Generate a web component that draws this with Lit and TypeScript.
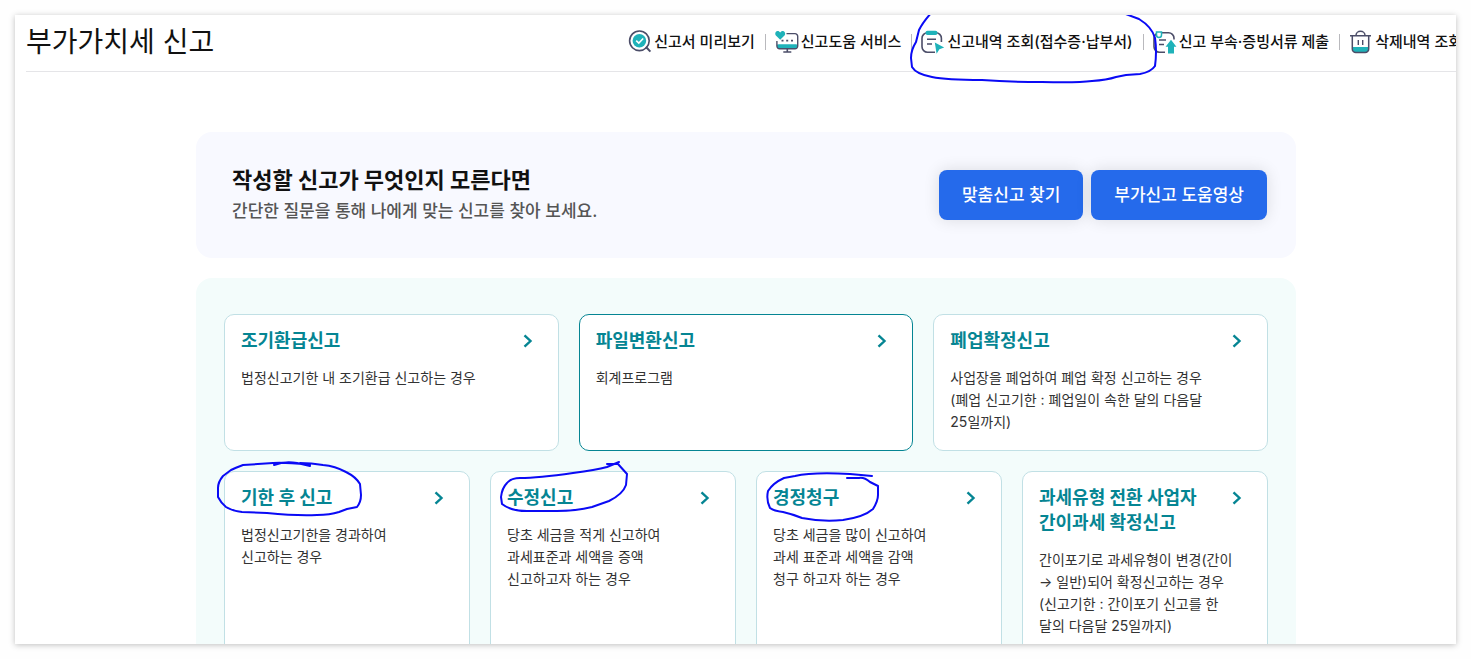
import { LitElement, html, svg, css, nothing } from "lit";
import { customElement } from "lit/decorators.js";
import { classMap } from "lit/directives/class-map.js";

const INK = "#4b4d68";
const TEAL = "#1fb2b9";

const icons = {
  preview: svg`
    <circle cx="11.4" cy="10.8" r="9.8" fill="none" stroke=${INK} stroke-width="1.6"/>
    <path d="M17.8 16.8l4.6 4.8" stroke=${INK} stroke-width="2" fill="none"/>
    <circle cx="11.4" cy="10.8" r="6.8" fill=${TEAL}/>
    <path d="M8.2 10.6l2.6 2.5 4.4-4.6" fill="none" stroke="#fff" stroke-width="1.6"/>`,
  help: svg`
    <path d="M2 14.5h20.6v1.8a2.6 2.6 0 0 1-2.6 2.6H4.6A2.6 2.6 0 0 1 2 16.3z" fill=${TEAL}/>
    <path d="M11.5 3.6H20a2.7 2.7 0 0 1 2.7 2.7V16a2.7 2.7 0 0 1-2.7 2.7H4.6A2.7 2.7 0 0 1 1.9 16V11" fill="none" stroke=${INK} stroke-width="1.4"/>
    <path d="M3.200 14.500h18.200v3.500H4.800q-1.600 0-1.600-2z" fill=${TEAL}/>
    <path d="M12.3 18.7v3.2M8.3 22h8" stroke=${INK} stroke-width="1.6" fill="none"/>
    <path d="M6.500 10.7h2M11.2 10.7h2M16 10.7h2" stroke=${INK} stroke-width="1.8"/>
    <path d="M5.2 9.8L.9 5.6C-.4 4 .3 1.3 2.5 1.1c1.2-.1 2 .5 2.7 1.5.7-1 1.5-1.6 2.7-1.5 2.2.2 2.9 2.9 1.6 4.5z" fill=${TEAL}/>`,
  history: svg`
    <path d="M20.4 12V8.2a5.5 5.5 0 0 0-5.5-5.5H6.5A5.5 5.5 0 0 0 1 8.2v8.6a5.5 5.5 0 0 0 5.5 5.5H14" fill="none" stroke=${INK} stroke-width="1.6"/>
    <rect x="4.5" y=".8" width="12" height="4.2" rx="2" fill=${TEAL}/>
    <path d="M6 9.3h9M6 14h5" stroke=${INK} stroke-width="1.5"/>
    <path d="M13.8 12.6l9.4 5-4.8 1.6-2.8 4.6z" fill=${TEAL}/>`,
  submit: svg`
    <path d="M21 9.5V8.2a5.5 5.5 0 0 0-5.5-5.5H6.5A5.5 5.5 0 0 0 1 8.2v8.6a5.5 5.5 0 0 0 5.5 5.5H12" fill="none" stroke=${INK} stroke-width="1.6"/>
    <path d="M3.5 2h5v3a2.5 2.5 0 0 1-5 0z" fill="#fff" stroke=${TEAL} stroke-width="1.5"/>
    <path d="M6 10h7M6 14.5h5" stroke=${INK} stroke-width="1.5"/>
    <path d="M18 9.8l5.4 7h-2.4v6.6h-6v-6.6h-2.4z" fill=${TEAL}/>`,
  trash: svg`
    <path d="M3.6 17h15.8v2.4a3 3 0 0 1-3 3H6.6a3 3 0 0 1-3-3z" fill=${TEAL}/>
    <path d="M3.3 6v13a3.5 3.5 0 0 0 3.5 3.5h9.4a3.5 3.5 0 0 0 3.5-3.5V6M1 5.8h21M7 5.5a4.5 4.2 0 0 1 9 0" fill="none" stroke=${INK} stroke-width="1.5"/>
    <path d="M9.3 10v5M13.7 10v5" stroke=${INK} stroke-width="1.4"/>`,
};

interface MenuItem {
  label: string;
  icon: keyof typeof icons;
  circled?: boolean;
}

const menu: MenuItem[] = [
  { label: "신고서 미리보기", icon: "preview" },
  { label: "신고도움 서비스", icon: "help" },
  { label: "신고내역 조회(접수증·납부서)", icon: "history", circled: true },
  { label: "신고 부속·증빙서류 제출", icon: "submit" },
  { label: "삭제내역 조회", icon: "trash" },
];

interface Card {
  title: string[];
  lines: string[];
  active?: boolean;
  pen?: string;
}

const periodCards: Card[] = [
  { title: ["조기환급신고"], lines: ["법정신고기한 내 조기환급 신고하는 경우"] },
  { title: ["파일변환신고"], lines: ["회계프로그램"], active: true },
  {
    title: ["폐업확정신고"],
    lines: ["사업장을 폐업하여 폐업 확정 신고하는 경우", "(폐업 신고기한 : 폐업일이 속한 달의 다음달", "25일까지)"],
  },
];

const otherCards: Card[] = [
  {
    title: ["기한 후 신고"],
    lines: ["법정신고기한을 경과하여", "신고하는 경우"],
    pen: "M95 6L82 3C72 1 64 3 59 5M95 5C86 4 70 2 58 3L28 5Q20 8 16 10L8 16Q3 22 3 28L3 37Q6 43 11 47Q18 51 27 52L52 53Q82 56 102 55Q115 55 124 52L132 49L142 47Q146 42 146 35L145 24Q141 17 131 12Q120 6 108 5Q96 3 85 3",
  },
  {
    title: ["수정신고"],
    lines: ["당초 세금을 적게 신고하여", "과세표준과 세액을 증액", "신고하고자 하는 경우"],
    pen: "M126 4L137 4L146 14L145 25Q142 34 128 41L111 47Q95 51 76 51L46 51Q30 51 21 44L20 37Q21 28 26 23Q30 18 39 18Q57 18 92 13Q115 10 126 7L138 2",
  },
  {
    title: ["경정청구"],
    lines: ["당초 세금을 많이 신고하여", "과세 표준과 세액을 감액", "청구 하고자 하는 경우"],
    pen: "M125 16L103 14Q65 12 48 16L37 18Q26 23 21 31Q19 40 23 48Q27 51 36 52Q45 54 55 58Q75 62 96 60Q117 57 126 49Q131 41 131 35L131 26L123 22Q117 17 112 18L100 18",
  },
  {
    title: ["과세유형 전환 사업자", "간이과세 확정신고"],
    lines: ["간이포기로 과세유형이 변경(간이", "→ 일반)되어 확정신고하는 경우", "(신고기한 : 간이포기 신고를 한", "달의 다음달 25일까지)"],
  },
];

const breakLines = (lines: string[]) =>
  lines.map((line, i) => html`${i ? html`<br />` : nothing}${line}`);

@customElement("app-root")
export class AppRoot extends LitElement {
  static styles = css`
    :host {
      display: flex;
      box-sizing: border-box;
      height: 100vh;
      padding: 15px;
      background: #fefefe;
      color: #111;
      font-family: Inter, "Noto Sans CJK KR", sans-serif;
      word-break: keep-all;
    }
    * {
      box-sizing: border-box;
      margin: 0;
    }
    a {
      color: inherit;
      text-decoration: none;
    }
    .shadow {
      display: flex;
      flex: 1;
      min-width: 0;
      box-shadow: 0 1px 6px rgba(0, 0, 0, 0.25);
    }
    .window {
      flex: 1;
      min-width: 0;
      overflow: hidden;
      background: #fff;
    }
    .page {
      margin: 0 -10px 0 11px;
    }
    .top {
      display: flex;
      justify-content: space-between;
      align-items: center;
      height: 57px;
      padding: 0 4px 2px 0;
      border-bottom: 1px solid #e5e5e8;
      white-space: nowrap;
    }
    .top h1 {
      font-size: 28px;
      font-weight: 400;
      line-height: 40px;
    }
    .menu {
      display: flex;
      align-items: center;
      list-style: none;
      padding: 0;
    }
    .menu li {
      display: flex;
      align-items: center;
    }
    .menu li + li::before {
      content: "";
      width: 1px;
      height: 16px;
      margin: 0 9px 0 10px;
      background: #b9b9bd;
    }
    .menu a {
      position: relative;
      display: flex;
      align-items: center;
      gap: 2px;
      height: 24px;
      font-size: 15px;
      font-weight: 500;
      line-height: 24px;
    }
    .icon {
      width: 24px;
      height: 24px;
    }
    .pen {
      position: absolute;
      z-index: 1;
      fill: none;
      stroke: #0a0af5;
      stroke-width: 2;
      stroke-linecap: round;
      stroke-linejoin: round;
      pointer-events: none;
    }
    .pen-menu {
      top: -15px;
      left: -12px;
      width: 250px;
      height: 72px;
    }
    .pen-card {
      top: -12px;
      left: -10px;
      width: 150px;
      height: 64px;
    }
    main {
      display: flex;
      flex-direction: column;
      gap: 20px;
      max-width: 1100px;
      margin: 60px auto 0;
    }
    .guide {
      display: flex;
      align-items: center;
      justify-content: space-between;
      padding: 32px 29px 32px 36px;
      border-radius: 16px;
      background: #f8f9ff;
    }
    .guide h2 {
      font-size: 22px;
      font-weight: 700;
      line-height: 32px;
    }
    .guide p {
      color: #555;
      font-size: 17px;
      font-weight: 500;
      line-height: 30px;
    }
    .actions {
      display: flex;
      gap: 8px;
    }
    .actions button {
      height: 50px;
      padding: 0 23px;
      border: 0;
      border-radius: 8px;
      background: #256aeb;
      box-shadow: 0 0 16px rgba(0, 0, 0, 0.12);
      color: #fff;
      font-family: inherit;
      font-size: 17px;
      font-weight: 500;
      line-height: 24px;
    }
    .reports {
      display: flex;
      flex-direction: column;
      gap: 20px;
      padding: 36px 28px;
      border-radius: 16px;
      background: #f3fcfb;
    }
    .row {
      display: grid;
      grid-auto-flow: column;
      grid-auto-columns: minmax(0, 1fr);
      gap: 20px;
    }
    .card {
      position: relative;
      padding: 13px 16px 17px;
      border: 1px solid #c1e0e5;
      border-radius: 10px;
      background: #fff;
    }
    .tall {
      min-height: 200px;
    }
    .active {
      border-color: #058593;
    }
    .head {
      display: flex;
      justify-content: space-between;
      align-items: flex-start;
      padding-right: 8px;
      margin-bottom: 14px;
      color: #058593;
    }
    .head h3 {
      font-size: 18px;
      font-weight: 700;
      line-height: 25px;
      white-space: nowrap;
    }
    .chevron {
      flex: none;
      width: 12px;
      height: 25px;
      fill: none;
      stroke: currentColor;
      stroke-width: 2.4;
    }
    .card p {
      color: #333;
      font-size: 14px;
      line-height: 22px;
      white-space: nowrap;
    }
  `;

  private renderCard(card: Card, tall: boolean) {
    return html`
      <a href="#" class=${classMap({ card: true, tall, active: !!card.active })}>
        <div class="head">
          <h3>${breakLines(card.title)}</h3>
          <svg class="chevron" viewBox="0 0 12 25" aria-hidden="true"><path d="M2.5 7.3l6 5.7-6 5.7" /></svg>
        </div>
        <p>${breakLines(card.lines)}</p>
        ${card.pen
          ? html`<svg class="pen pen-card" viewBox="0 0 150 64" aria-hidden="true"><path d=${card.pen} /></svg>`
          : nothing}
      </a>
    `;
  }

  render() {
    return html`
      <div class="shadow">
        <div class="window">
          <div class="page">
            <header class="top">
              <h1>부가가치세 신고</h1>
              <nav>
                <ul class="menu">
                  ${menu.map(
                    (item) => html`<li>
                      <a href="#">
                        <svg class="icon" viewBox="0 0 24 24" aria-hidden="true">${icons[item.icon]}</svg>
                        ${item.label}
                        ${item.circled
                          ? html`<svg class="pen pen-menu" viewBox="910 15 250 72" aria-hidden="true">
                              <path d="M933 12Q924 22 920 30L917 42Q912 50 912 58L913 67Q917 74 933 77Q947 80 983 80Q1010 82 1043 82Q1078 83 1093 81Q1108 80 1117 77L1127 75L1141 74Q1152 72 1156 66Q1158 52 1156 38Q1153 27 1140 19Q1132 16 1124 13" />
                            </svg>`
                          : nothing}
                      </a>
                    </li>`
                  )}
                </ul>
              </nav>
            </header>
            <main>
              <section class="guide">
                <div>
                  <h2>작성할 신고가 무엇인지 모른다면</h2>
                  <p>간단한 질문을 통해 나에게 맞는 신고를 찾아 보세요.</p>
                </div>
                <div class="actions">
                  <button type="button">맞춤신고 찾기</button>
                  <button type="button">부가신고 도움영상</button>
                </div>
              </section>
              <section class="reports">
                <div class="row">${periodCards.map((card) => this.renderCard(card, false))}</div>
                <div class="row">${otherCards.map((card) => this.renderCard(card, true))}</div>
              </section>
            </main>
          </div>
        </div>
      </div>
    `;
  }
}
